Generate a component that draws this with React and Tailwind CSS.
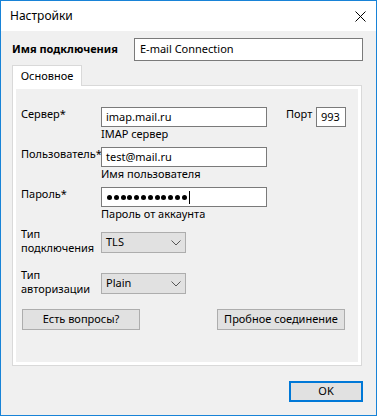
import React from "react";

const Input = ({ className = "", children }) => (
  <div className={"h-[20px] border border-[#7a7a7a] bg-white flex items-center pl-[4px] " + className}>
    {children}
  </div>
);

const Chevron = () => (
  <svg width="10" height="6" viewBox="0 0 10 6">
    <path d="M0.5 0.5L5 5L9.5 0.5" fill="none" stroke="#555" strokeWidth="1" />
  </svg>
);

const Select = ({ value }) => (
  <div className="w-[85px] h-[21px] border border-[#adadad] bg-[#e1e1e1] flex items-center justify-between pl-[4px] pr-[4px]">
    <span>{value}</span>
    <Chevron />
  </div>
);

const App = () => {
  const dots = Array.from({ length: 12 });

  return (
    <div className="w-[377px] h-[416px] border border-[#1883d7] bg-[#f0f0f0] flex flex-col font-['Noto_Sans',sans-serif] text-[11px] text-black overflow-hidden">
      {/* title bar */}
      <div className="h-[30px] shrink-0 bg-white flex items-center justify-between pl-[9px] pr-[10px]">
        <span className="text-[12px]">Настройки</span>
        <svg width="11" height="11" viewBox="0 0 11 11">
          <path d="M0.5 0.5L10.5 10.5M10.5 0.5L0.5 10.5" stroke="#000" strokeWidth="1" />
        </svg>
      </div>

      {/* connection name */}
      <div className="mt-[7px] flex items-center pl-[11px]">
        <div className="w-[122px] font-bold">Имя подключения</div>
        <div className="w-[229px] h-[23px] border border-[#7a7a7a] bg-white flex items-center pl-[5px]">
          E-mail Connection
        </div>
      </div>

      {/* tabs */}
      <div className="mt-[4px] ml-[11px] flex flex-col">
        <div className="relative z-10 -mb-px w-[70px] h-[21px] border border-b-0 border-[#d9d9d9] bg-white flex items-center justify-center">
          Основное
        </div>
        <div className="w-[350px] h-[281px] border border-[#d9d9d9]">
          <div className="h-full border-[3px] border-white bg-[#f0f0f0] pl-[5px] pt-[18px] flex flex-col">
            {/* server */}
            <div className="flex">
              <div className="w-[80px] leading-[14px]">Сервер*</div>
              <div className="flex flex-col">
                <Input className="w-[166px]">imap.mail.ru</Input>
                <div className="leading-[14px]">IMAP сервер</div>
              </div>
              <div className="ml-[19px] w-[30px] leading-[14px]">Порт</div>
              <Input className="w-[30px] pl-[3px]">993</Input>
            </div>

            {/* user */}
            <div className="flex mt-[6px]">
              <div className="w-[80px] leading-[14px] whitespace-nowrap">Пользователь*</div>
              <div className="flex flex-col">
                <Input className="w-[166px]">test@mail.ru</Input>
                <div className="leading-[14px]">Имя пользователя</div>
              </div>
            </div>

            {/* password */}
            <div className="flex mt-[6px]">
              <div className="w-[80px] leading-[14px]">Пароль*</div>
              <div className="flex flex-col">
                <Input className="w-[166px] pl-[5px]">
                  <div className="flex items-center gap-[1.8px]">
                    {dots.map((_, i) => (
                      <div key={i} className="w-[5px] h-[5px] rounded-full bg-black" />
                    ))}
                  </div>
                  <div className="ml-[2px] w-px h-[13px] bg-black" />
                </Input>
                <div className="leading-[14px]">Пароль от аккаунта</div>
              </div>
            </div>

            {/* connection type */}
            <div className="flex mt-[6px]">
              <div className="w-[80px] leading-[14px]">
                <div>Тип</div>
                <div>подключения</div>
              </div>
              <div className="mt-[5px]">
                <Select value="TLS" />
              </div>
            </div>

            {/* auth type */}
            <div className="flex mt-[13px]">
              <div className="w-[80px] leading-[14px]">
                <div>Тип</div>
                <div>авторизации</div>
              </div>
              <div className="mt-[5px]">
                <Select value="Plain" />
              </div>
            </div>

            {/* buttons */}
            <div className="flex mt-[13px] ml-[1px]">
              <button className="w-[118px] h-[21px] border border-[#adadad] bg-[#e1e1e1]">
                Есть вопросы?
              </button>
              <button className="ml-[77px] w-[128px] h-[21px] border border-[#adadad] bg-[#e1e1e1]">
                Пробное соединение
              </button>
            </div>
          </div>
        </div>
      </div>

      {/* footer */}
      <div className="mt-[15px] mr-[13px] self-end">
        <button className="w-[74px] h-[21px] border-2 border-[#0078d7] bg-[#e1e1e1]">
          OK
        </button>
      </div>
    </div>
  );
};

export default App;
